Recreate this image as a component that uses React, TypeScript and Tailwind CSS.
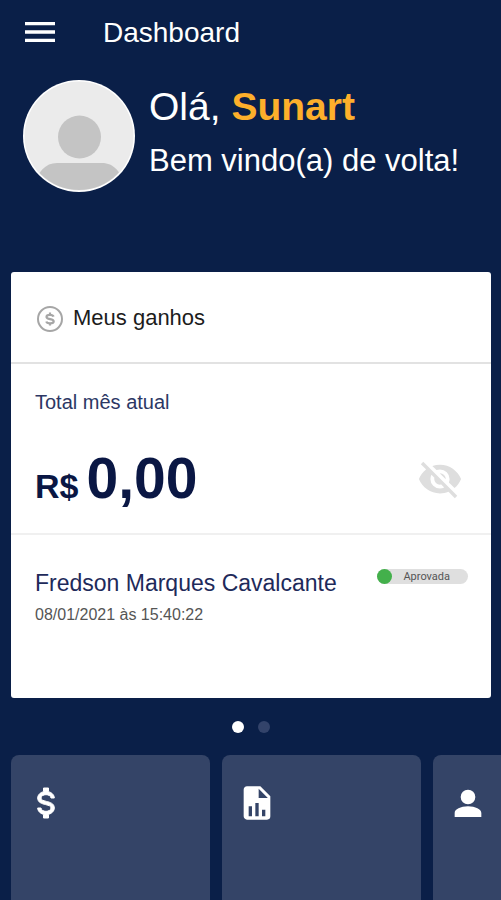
import type { ReactNode } from 'react';

const ICONS = {
  menu: 'M3,6H21V8H3V6M3,11H21V13H3V11M3,16H21V18H3V16Z',
  money:
    'M7,15H9C9,16.08 10.37,17 12,17C13.63,17 15,16.08 15,15C15,13.9 13.96,13.5 11.76,12.97C9.64,12.44 7,11.78 7,9C7,7.21 8.47,5.69 10.5,5.18V3H13.5V5.18C15.53,5.69 17,7.21 17,9H15C15,7.92 13.63,7 12,7C10.37,7 9,7.92 9,9C9,10.1 10.04,10.5 12.24,11.03C14.36,11.56 17,12.22 17,15C17,16.79 15.53,18.31 13.5,18.82V21H10.5V18.82C8.47,18.31 7,16.79 7,15Z',
  report:
    'M13,9H18.5L13,3.5V9M6,2H14L20,8V20A2,2 0 0,1 18,22H6C4.89,22 4,21.1 4,20V4C4,2.89 4.89,2 6,2M7,20H9V14H7V20M11,20H13V12H11V20M15,20H17V16H15V20Z',
  account:
    'M12,4A4.4,4.4 0 0,1 16.4,8.4A4.4,4.4 0 0,1 12,12.8A4.4,4.4 0 0,1 7.6,8.4A4.4,4.4 0 0,1 12,4M12,14C16.42,14 20,15.79 20,18V20.4H4V18C4,15.79 7.58,14 12,14Z',
  eyeOff:
    'M11.83,9L15,12.16C15,12.11 15,12.05 15,12A3,3 0 0,0 12,9C11.94,9 11.89,9 11.83,9M7.53,9.8L9.08,11.35C9.03,11.56 9,11.77 9,12A3,3 0 0,0 12,15C12.22,15 12.44,14.97 12.65,14.92L14.2,16.47C13.53,16.8 12.79,17 12,17A5,5 0 0,1 7,12C7,11.21 7.2,10.47 7.53,9.8M2,4.27L4.28,6.55L4.73,7C3.08,8.3 1.78,10 1,12C2.73,16.39 7,19.5 12,19.5C13.55,19.5 15.03,19.2 16.38,18.66L16.81,19.08L19.73,22L21,20.73L3.27,3M12,7A5,5 0 0,1 17,12C17,12.64 16.87,13.26 16.64,13.82L19.57,16.75C21.07,15.5 22.27,13.86 23,12C21.27,7.61 17,4.5 12,4.5C10.6,4.5 9.26,4.75 8,5.2L10.17,7.35C10.74,7.13 11.35,7 12,7Z',
};

function Icon({ path, className }: { path: string; className: string }) {
  return (
    <svg viewBox="0 0 24 24" fill="currentColor" className={className} aria-hidden="true">
      <path d={path} />
    </svg>
  );
}

function CoinIcon() {
  return (
    <svg viewBox="0 0 26 26" fill="none" stroke="#a6a6a6" strokeWidth="2" className="size-[26px] shrink-0" aria-hidden="true">
      <circle cx="13" cy="13" r="12" />
      <path
        strokeWidth="2.2"
        d="M16.6 10.6C16.2 9.5 14.9 8.8 13 8.8c-2.1 0-3.5.8-3.5 2.1 0 3 7.2 1.3 7.2 4.4 0 1.3-1.5 2.1-3.7 2.1-2 0-3.3-.7-3.7-1.9M13 6.6v2.2M13 17.4v2.2"
      />
    </svg>
  );
}

function Avatar() {
  return (
    <svg viewBox="0 0 112 112" className="size-28 shrink-0" aria-hidden="true">
      <clipPath id="avatar-clip">
        <circle cx="56" cy="56" r="54" />
      </clipPath>
      <circle cx="56" cy="56" r="56" fill="#fff" />
      <circle cx="56" cy="56" r="54.5" fill="#ebebeb" />
      <g clipPath="url(#avatar-clip)" fill="#c4c4c4">
        <circle cx="56.5" cy="57" r="21.5" />
        <path d="M8 112C14 92 22 83 34 83H79C91 83 99 92 104 112Z" />
      </g>
    </svg>
  );
}

function Tile({ label, children }: { label: string; children: ReactNode }) {
  return (
    <button
      type="button"
      aria-label={label}
      className="flex w-[199px] shrink-0 items-start rounded-t-lg bg-[#344467] px-[15px] pt-7 text-white"
    >
      {children}
    </button>
  );
}

export default function App() {
  return (
    <div className="flex min-h-screen flex-col bg-[#0a1f48] font-['Liberation_Sans',Arial,sans-serif] text-white">
      <header className="flex h-16 items-center gap-[43px] px-5">
        <button type="button" aria-label="Menu">
          <Icon path={ICONS.menu} className="size-10" />
        </button>
        <h1 className="pt-0.5 text-[28px] leading-8">Dashboard</h1>
      </header>

      <section className="flex gap-[14px] pt-4 pr-4 pl-[23px]">
        <Avatar />
        <div className="flex flex-col gap-[10px] pt-[3px] whitespace-nowrap">
          <p className="text-[39px] leading-[48px]">
            Olá, <strong className="text-[#fdaf2b]">Sunart</strong>
          </p>
          <p className="text-[31px] leading-10">Bem vindo(a) de volta!</p>
        </div>
      </section>

      <main className="flex flex-1 flex-col pt-20">
        <section className="mr-[10px] ml-[11px] rounded-[3px] bg-white text-[#0a1744]">
          <div className="flex h-[92px] items-center gap-[10px] border-b-2 border-[#e2e2e2] px-[26px] pt-1">
            <CoinIcon />
            <h2 className="pb-0.5 text-[22px] leading-7 text-[#1c1c1c]">Meus ganhos</h2>
          </div>

          <div className="flex flex-col gap-8 border-b-2 border-[#f0f0f0] px-6 pt-[26px] pb-[21px]">
            <p className="text-[20px] leading-6 text-[#2c3764]">Total mês atual</p>
            <div className="flex items-center justify-between">
              <p className="flex items-baseline gap-2 font-bold">
                <span className="text-[34px]">R$</span>
                <span className="text-[57px] leading-[64px]">0,00</span>
              </p>
              <button type="button" aria-label="Mostrar valor" className="mr-1 text-[#dedede]">
                <Icon path={ICONS.eyeOff} className="size-[46px]" />
              </button>
            </div>
          </div>

          <div className="flex items-start justify-between pt-[34px] pr-[23px] pb-[71px] pl-6">
            <div className="flex flex-col gap-[6px]">
              <p className="text-[23px] leading-7 text-[#1e2a5a]">Fredson Marques Cavalcante</p>
              <p className="text-[16px] leading-6 text-[#555555]">08/01/2021 às 15:40:22</p>
            </div>
            <span className="flex h-[15px] items-center gap-[11px] rounded-full bg-[#dfdfdf] pr-[18px] font-[Roboto,sans-serif] text-[11px] leading-[15px] text-[#555555]">
              <span className="size-[15px] rounded-full bg-[#43b04b]" />
              Aprovada
            </span>
          </div>
        </section>

        <div className="flex justify-center gap-[14px] pt-[23px] pb-[22px]">
          <button type="button" aria-label="Slide 1" className="size-3 rounded-full bg-white" />
          <button type="button" aria-label="Slide 2" className="size-3 rounded-full bg-[#33436a]" />
        </div>

        <nav className="flex flex-1 gap-3 overflow-hidden pl-[11px]">
          <Tile label="Ganhos">
            <Icon path={ICONS.money} className="size-10 stroke-white stroke-[0.6]" />
          </Tile>
          <Tile label="Relatórios">
            <Icon path={ICONS.report} className="size-10" />
          </Tile>
          <Tile label="Perfil">
            <Icon path={ICONS.account} className="size-10" />
          </Tile>
        </nav>
      </main>
    </div>
  );
}
